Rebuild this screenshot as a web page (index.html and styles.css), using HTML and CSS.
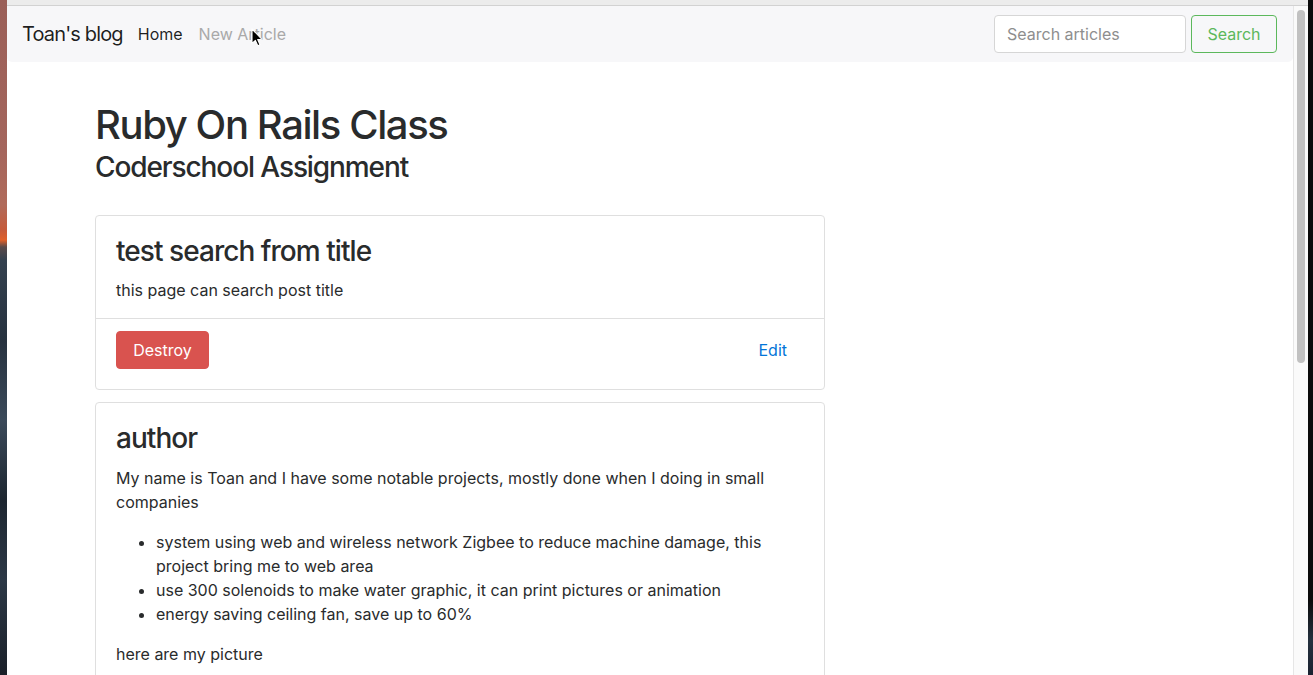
FILE: index.html
```html
<!DOCTYPE html>
<html lang="en">
<head>
<meta charset="utf-8">
<title>Toan's blog</title>
<link rel="stylesheet" href="styles.css">
</head>
<body>
<div class="desktop">
  <div class="wall-left"></div>
  <div class="window">
    <div class="chrome"></div>
    <div class="frame">
      <div class="viewport">
        <nav class="navbar">
          <div class="nav-left">
            <a class="brand" href="#">Toan's blog</a>
            <a class="nav-link active" href="#">Home</a>
            <a class="nav-link muted" href="#">New Article</a>
          </div>
          <form class="search">
            <input class="search-input" type="text" placeholder="Search articles">
            <button class="search-btn" type="button">Search</button>
          </form>
        </nav>
        <main class="container">
          <h1 class="page-title">Ruby On Rails Class</h1>
          <h3 class="page-subtitle">Coderschool Assignment</h3>

          <div class="card">
            <div class="card-body">
              <h3 class="card-title">test search from title</h3>
              <p class="card-text last">this page can search post title</p>
            </div>
            <div class="card-footer">
              <button class="btn-destroy" type="button">Destroy</button>
              <a class="edit-link" href="#">Edit</a>
            </div>
          </div>

          <div class="card">
            <div class="card-body">
              <h3 class="card-title">author</h3>
              <p class="card-text">My name is Toan and I have some notable projects, mostly done when I doing in small companies</p>
              <ul class="card-list">
                <li>system using web and wireless network Zigbee to reduce machine damage, this project bring me to web area</li>
                <li>use 300 solenoids to make water graphic, it can print pictures or animation</li>
                <li>energy saving ceiling fan, save up to 60%</li>
              </ul>
              <p class="card-text">here are my picture</p>
            </div>
          </div>
        </main>
        <svg class="cursor" width="12" height="19" viewBox="0 0 12 19" aria-hidden="true">
          <path d="M1 1 L1 15.5 L4.4 12.4 L6.8 17.8 L9 16.8 L6.7 11.6 L11 11.3 Z" fill="#000" stroke="#fff" stroke-width="1.1" stroke-linejoin="round"/>
        </svg>
      </div>
      <div class="scrollbar"><div class="thumb"></div></div>
    </div>
  </div>
  <div class="wall-right"></div>
</div>
</body>
</html>
```

FILE: styles.css
```css
* { box-sizing: border-box; }

html, body {
  margin: 0;
  padding: 0;
  height: 675px;
  overflow: hidden;
  background: #0b0b0b;
}

body {
  font-family: "Inter", "Liberation Sans", sans-serif;
  color: #292b2c;
  font-size: 16px;
  line-height: 24px;
}

.desktop {
  display: flex;
  height: 675px;
}

.wall-left {
  width: 7px;
  flex: none;
  background: linear-gradient(to bottom,
    #9a5f58 0px, #a4655c 150px, #b06a5a 205px, #c65a3a 230px,
    #e0602a 240px, #5a4a4a 247px, #34414f 260px, #27323f 340px,
    #3b4a5a 420px, #1d2630 500px, #2c3846 580px, #1a2029 675px);
}

.wall-right {
  width: 5px;
  flex: none;
  background: linear-gradient(to bottom, #0a0a0a 0px, #0a0a0a 600px, #24303e 640px, #1a2230 675px);
}

.window {
  flex: 1;
  display: flex;
  flex-direction: column;
  background: #fff;
}

.chrome {
  height: 6px;
  flex: none;
  background: #ececec;
  border-bottom: 1px solid #d2d2d2;
}

.frame {
  flex: 1;
  display: flex;
  min-height: 0;
}

.viewport {
  position: relative;
  flex: 1;
  overflow: hidden;
  background: #fff;
}

.scrollbar {
  width: 15px;
  flex: none;
  background: #fafafa;
  border-left: 1px solid #e6e6e6;
  padding: 4px 0 0 3px;
}

.thumb {
  width: 8px;
  height: 353px;
  border-radius: 4px;
  background: #c1c1c1;
}

/* navbar */
.navbar {
  display: flex;
  align-items: center;
  justify-content: space-between;
  background: #f7f7f9;
  padding: 8px 16px;
  border-radius: 0 0 5px 5px;
}

.nav-left {
  display: flex;
  align-items: center;
}

.brand {
  font-size: 20px;
  line-height: 30px;
  color: rgba(0, 0, 0, 0.88);
  text-decoration: none;
  margin-right: 7px;
  margin-left: -1px;
  letter-spacing: -0.85px;
}

.nav-link {
  padding: 8px 8px;
  text-decoration: none;
  font-size: 16px;
}

.nav-link.active { color: rgba(0, 0, 0, 0.88); }
.nav-link.muted { color: #a9a9a9; }

.search {
  display: flex;
  align-items: center;
  margin: 0;
}

.search-input {
  width: 192px;
  height: 38px;
  padding: 6px 12px;
  font-family: inherit;
  font-size: 16px;
  color: #464a4c;
  background: #fff;
  border: 1px solid #d6d6d6;
  border-radius: 4px;
  margin-right: 5px;
  outline: none;
}

.search-input::placeholder { color: #8e8e8e; }

.search-btn {
  height: 38px;
  width: 86px;
  font-family: inherit;
  font-size: 16px;
  color: #5cb85c;
  background: transparent;
  border: 1px solid #5cb85c;
  border-radius: 4px;
  padding: 6px 12px;
}

/* content */
.container {
  width: 1140px;
  margin: 0 auto;
  padding: 39px 15px 0;
}

.page-title {
  font-size: 40px;
  line-height: 48px;
  font-weight: 500;
  margin: 0 0 2px;
  letter-spacing: -1.4px;
}

.page-subtitle {
  font-size: 28px;
  line-height: 33.6px;
  font-weight: 500;
  margin: 0 0 30px;
  letter-spacing: -1.1px;
}

.card {
  width: 730px;
  border: 1px solid #dfdfdf;
  border-radius: 4px;
  margin-bottom: 12px;
  background: #fff;
}

.card-body {
  padding: 19px 20px 16px;
}

.card-title {
  font-size: 28px;
  line-height: 33.6px;
  font-weight: 500;
  margin: 0 0 10px;
  letter-spacing: -0.95px;
}

.card-text {
  margin: 0 0 16px;
}

.card-text.last { margin-bottom: 0; }

.card-list {
  margin: 0 0 16px;
  padding-left: 40px;
}

.card-footer {
  display: flex;
  align-items: center;
  justify-content: space-between;
  border-top: 1px solid #dfdfdf;
  padding: 12px 37px 20px 20px;
}

.btn-destroy {
  height: 38px;
  width: 93px;
  font-family: inherit;
  font-size: 16px;
  color: #fff;
  background: #d9534f;
  border: 1px solid #d9534f;
  border-radius: 4px;
  padding: 6px 12px;
}

.edit-link {
  color: #0275d8;
  text-decoration: none;
}

.cursor {
  position: absolute;
  left: 244px;
  top: 22px;
}
```
